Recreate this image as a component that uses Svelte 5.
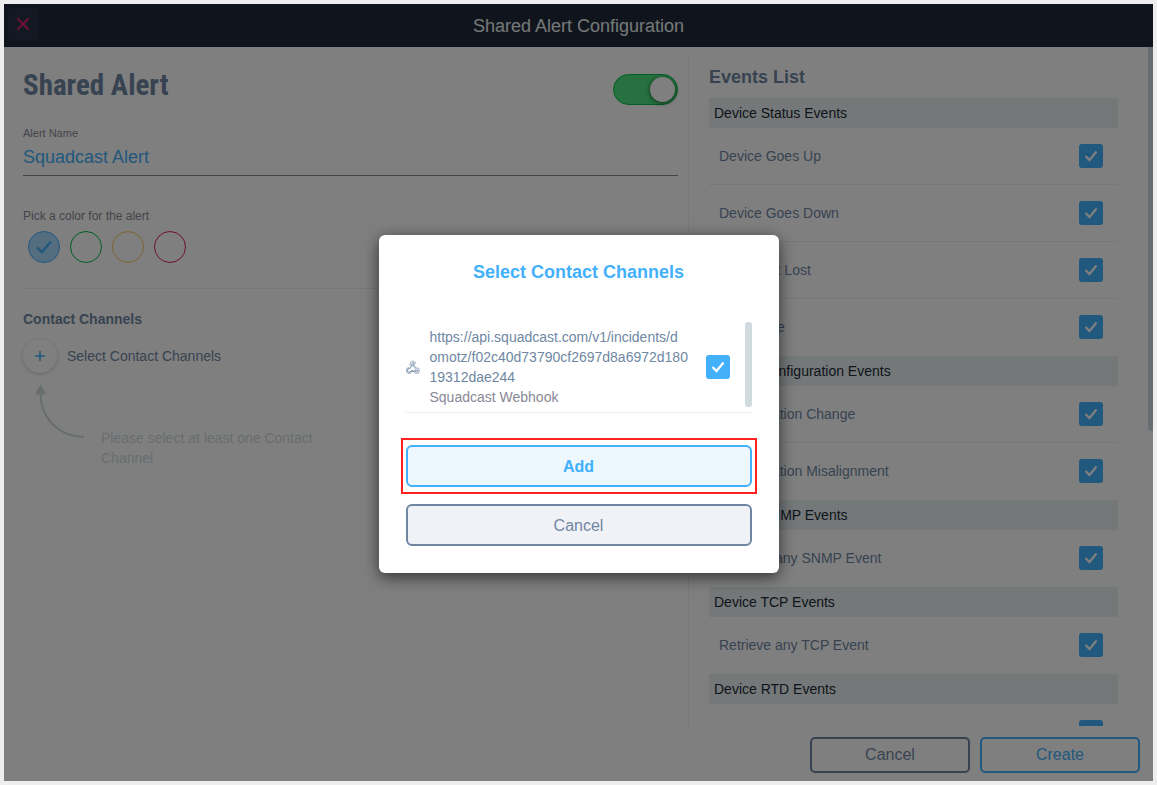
<script>
  const colors = [
    { name: 'Blue', value: '#42b0fb' },
    { name: 'Green', value: '#00c044' },
    { name: 'Yellow', value: '#ffc561' },
    { name: 'Red', value: '#e0225f' }
  ];
  const groups = [
    { title: 'Device Status Events', events: ['Device Goes Up', 'Device Goes Down', 'Heartbeat Lost', 'IP Change'] },
    { title: 'Device Configuration Events', events: ['Configuration Change', 'Configuration Misalignment'] },
    { title: 'Device SNMP Events', events: ['Retrieve any SNMP Event'] },
    { title: 'Device TCP Events', events: ['Retrieve any TCP Event'] },
    { title: 'Device RTD Events', events: [''] }
  ];
  let picked = $state('Blue');
  let alertName = $state('Squadcast Alert');
</script>

<div class="page">
  <header>
    <button class="close" aria-label="Close">
      <svg width="14" height="14" viewBox="0 0 14 14"><path d="M1.5 1.5L12.5 12.5M12.5 1.5L1.5 12.5" /></svg>
    </button>
    <h1>Shared Alert Configuration</h1>
  </header>

  <div class="content">
    <section class="form">
      <div class="heading">
        <h2>Shared Alert</h2>
        <input class="toggle" type="checkbox" role="switch" aria-label="Alert enabled" checked />
      </div>
      <label class="small" for="alert-name">Alert Name</label>
      <input id="alert-name" class="name" type="text" bind:value={alertName} />
      <fieldset>
        <legend>Pick a color for the alert</legend>
        <div class="colors">
          {#each colors as c}
            <label class="color" style="--c: {c.value}">
              <input type="radio" name="color" value={c.name} aria-label={c.name} bind:group={picked} />
              {#if picked === c.name}
                <svg width="18" height="16" viewBox="0 0 18 16"><path d="M2 8.5l5 4.5L16 2.5" /></svg>
              {/if}
            </label>
          {/each}
        </div>
      </fieldset>
      <h3>Contact Channels</h3>
      <button class="pick">
        <span class="plus"><svg width="12" height="12" viewBox="0 0 12 12"><path d="M6 1v10M1 6h10" /></svg></span>
        Select Contact Channels
      </button>
      <div class="hint">
        <svg width="52" height="54" viewBox="0 0 52 54">
          <path class="curve" d="M5.500 8C5.500 34 24 51.500 49 52" />
          <path class="tip" d="M4.500 1Q5.500 -.5 6.500 1L10.500 8Q10.500 9.500 9.500 9.500H1.500Q.5 9.500 .5 8Z" />
        </svg>
        <p>Please select at least one Contact Channel</p>
      </div>
    </section>

    <section class="events">
      <h3>Events List</h3>
      {#each groups as g}
        <h4>{g.title}</h4>
        <ul>
          {#each g.events as e}
            <li><label><span>{e}</span><input class="check" type="checkbox" aria-label={e || g.title} checked /></label></li>
          {/each}
        </ul>
      {/each}
    </section>
    <div class="scroll"></div>
  </div>

  <footer>
    <button class="grey">Cancel</button>
    <button class="blue">Create</button>
  </footer>

  <div class="overlay">
    <div class="dialog" role="dialog" aria-modal="true" aria-labelledby="dialog-title">
      <h2 id="dialog-title">Select Contact Channels</h2>
      <div class="channels">
        <label class="channel">
          <svg class="hook" width="14" height="14" viewBox="0 0 28 28">
            <path d="M13.500 11.500a2 2 0 1 0-1.500-2L8 17.500a3.500 3.500 0 1 0 1.500 5.500h8" />
            <path d="M9 12A6 6 0 1 1 19.500 6.500L17 7A3.500 3.500 0 1 0 11.500 11L8 17" />
            <path d="M14 7a2 2 0 0 1 2 3l3.500 6A6 6 0 1 1 17 25.500l1.500-2A3.500 3.500 0 1 0 19 19L13 9" />
            <path d="M6 15A6 6 0 1 0 12 23h9a1.500 1.500 0 1 0 0-2H10A4 4 0 1 1 6 17Z" />
          </svg>
          <span class="text">
            <span class="url">https://api.squadcast.com/v1/incidents/d<br />omotz/f02c40d73790cf2697d8a6972d180<br />19312dae244</span>
            <span class="kind">Squadcast Webhook</span>
          </span>
          <input class="check" type="checkbox" checked />
        </label>
        <div class="bar"></div>
      </div>
      <div class="marked"><button class="add">Add</button></div>
      <button class="dismiss">Cancel</button>
    </div>
  </div>
</div>

<style>
  :global(body) {
    margin: 0;
    background: #eee;
    font-family: "Liberation Sans", Arial, sans-serif;
    font-size: 14px;
    line-height: 20px;
    color: #6f87a3;
  }
  .page, .page * { box-sizing: border-box; }
  .page {
    position: relative;
    display: flex;
    flex-direction: column;
    margin: 4px;
    height: calc(100vh - 8px);
    overflow: hidden;
    background: #fff;
  }
  h1, h2, h3, h4, p, ul, fieldset, legend { margin: 0; padding: 0; border: 0; }
  button, input { font: inherit; }
  svg { flex: none; fill: none; stroke: currentColor; stroke-width: 2; }
  header {
    flex: none;
    display: grid;
    grid-template-columns: 38px 1fr 38px;
    align-items: center;
    height: 43px;
    background: #212b3a;
    color: #e8f0f0;
  }
  h1 { font-size: 18px; font-weight: 400; text-align: center; }
  .close {
    display: flex;
    align-items: center;
    justify-content: center;
    width: 30px;
    height: 32px;
    margin: 0 4px 4px;
    padding: 0;
    border: 0;
    border-radius: 5px;
    background: #263345;
    color: #e0226b;
  }
  .content { flex: 1; min-height: 0; display: flex; overflow: hidden; }
  .form {
    flex: 1;
    margin-top: 8px;
    padding: 12px 10px 0 19px;
    border-right: 1px solid #eee;
    display: flex;
    flex-direction: column;
  }
  .heading { display: flex; justify-content: space-between; align-items: flex-start; height: 58px; }
  .heading h2 {
    font-family: "Liberation Sans Narrow", "Roboto Condensed", "Liberation Sans", sans-serif;
    font-size: 29px;
    line-height: 36px;
    white-space: nowrap;
  }
  .toggle {
    appearance: none;
    display: flex;
    justify-content: flex-end;
    width: 65px;
    height: 31px;
    margin: 7px 0 0;
    border: 1px solid #00c044;
    border-radius: 16px;
    background: #4ce27e;
    padding: 2px;
  }
  .toggle::before {
    content: "";
    width: 25px;
    height: 25px;
    border-radius: 50%;
    background: #fff;
    box-shadow: 0 1px 5px #0009;
  }
  .small { font-size: 11px; line-height: 16px; color: #888896; }
  .name {
    height: 35px;
    padding: 0 0 2px;
    border: 0;
    border-bottom: 1px solid #888;
    background: none;
    font-size: 18px;
    color: #42b0fb;
  }
  fieldset { min-width: 0; padding: 30px 0 25px; border-bottom: 1px solid #eee; }
  legend { float: left; width: 100%; font-size: 12px; color: #888896; }
  .colors { clear: both; display: flex; gap: 10px; padding: 5px 5px 0; }
  .color {
    display: flex;
    align-items: center;
    justify-content: center;
    width: 32px;
    height: 32px;
    border: 1px solid var(--c);
    border-radius: 50%;
    color: var(--c);
  }
  .color input { appearance: none; position: absolute; margin: 0; }
  .color:has(input:checked) { background: #a8dcff; }
  .color svg { stroke-width: 2.5; }
  .form h3 { margin-top: 20px; font-size: 14px; }
  .pick {
    display: flex;
    align-items: center;
    gap: 10px;
    align-self: flex-start;
    margin-top: 10px;
    padding: 0;
    border: 0;
    background: none;
    color: inherit;
  }
  .plus {
    display: flex;
    align-items: center;
    justify-content: center;
    width: 34px;
    height: 34px;
    border-radius: 50%;
    box-shadow: 0 1px 4px #0003;
    color: #42b0fb;
  }
  .plus svg { stroke-width: 1.500; }
  .hint { display: flex; gap: 14px; padding: 12px 0 0 12px; color: #d0dbe0; }
  .hint p { width: 240px; padding-top: 43px; }
  .tip { fill: currentColor; stroke: none; }
  .events { flex: 0 1 459px; padding: 20px 30px 0 20px; }
  .events h3 { font-size: 18px; margin-bottom: 11px; }
  h4 {
    padding: 5px;
    background: #e8f0f0;
    color: #212b3a;
    font-size: 14px;
    font-weight: 400;
  }
  ul { list-style: none; }
  li { border-bottom: 1px solid #eee; }
  li:last-child { border-color: transparent; }
  li label { display: flex; align-items: center; justify-content: space-between; height: 56px; padding: 0 15px 0 10px; }
  .check {
    flex: none;
    appearance: none;
    width: 24px;
    height: 24px;
    margin: 0;
    border-radius: 3px;
    background: #42b0fb url("data:image/svg+xml,%3Csvg xmlns='http://www.w3.org/2000/svg' viewBox='0 0 24 24'%3E%3Cpath d='M6.500 12l4 4 7-8.500' fill='none' stroke='white' stroke-width='2.200'/%3E%3C/svg%3E");
  }
  .scroll { flex: none; width: 5px; height: 384px; border-radius: 0 0 0 3px; background: #d0dbe0; }
  footer { flex: none; display: flex; justify-content: flex-end; gap: 10px; padding: 11px 13px 8px; }
  footer button {
    width: 160px;
    height: 36px;
    border: 2px solid currentColor;
    border-radius: 5px;
    background: none;
    font-size: 16px;
  }
  .grey { color: #6f87a3; }
  .blue { color: #42b0fb; }
  .overlay {
    position: absolute;
    inset: 0;
    display: flex;
    align-items: center;
    justify-content: center;
    background: #00000080;
  }
  .dialog {
    width: 400px;
    padding: 27px;
    border-radius: 6px;
    background: #fff;
    box-shadow: 0 4px 16px #0009;
    margin-top: 23px;
  }
  .dialog h2 { margin-bottom: 40px; font-size: 18px; color: #42b0fb; text-align: center; }
  .channels { display: flex; justify-content: space-between; border-bottom: 1px solid #eee; }
  .channel { display: flex; align-items: center; gap: 10px; padding: 5px 0; }
  .text { width: 266px; }
  .url, .kind { display: block; white-space: nowrap; }
  .kind { color: #888896; }
  .hook { stroke-width: 1.2; }
  .bar { width: 7px; height: 85px; border-radius: 3px; background: #d0dbe0; }
  .marked { margin: 25px -5px 10px; padding: 5px 3px; border: 2px solid #ff2020; }
  .add, .dismiss {
    display: block;
    width: 100%;
    height: 42px;
    padding: 2px 0 0;
    border: 2px solid currentColor;
    border-radius: 6px;
    font-size: 16px;
  }
  .add { background: #ecf7fe; color: #42b0fb; font-weight: 700; }
  .dismiss { background: #f1f2f7; color: #6f87a3; }
</style>
